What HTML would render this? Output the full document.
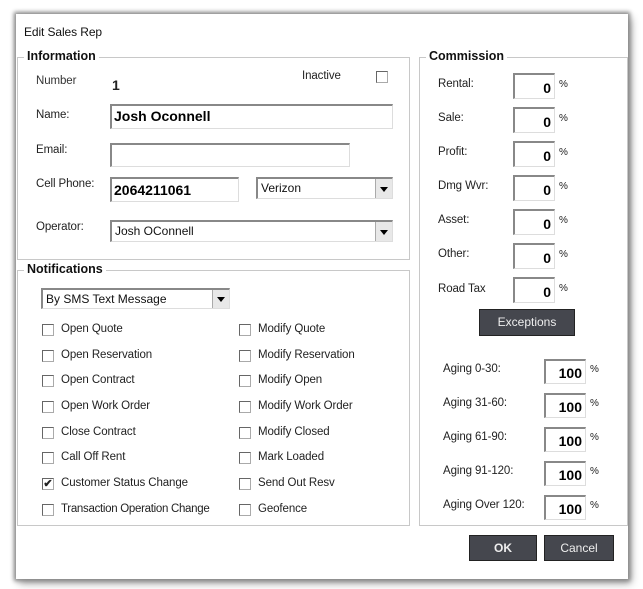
<!DOCTYPE html>
<html><head><style>
*{box-sizing:border-box;margin:0;padding:0}
body{width:643px;height:589px;background:#fff;position:relative;font-family:"Liberation Sans",sans-serif;font-size:11.5px;color:#222;overflow:hidden}
.dlg{position:absolute;left:16px;top:14px;width:612px;height:565px;background:#fff;box-shadow:0 0 4px 2px #888,3px 4px 8px #999}
.a{position:absolute;white-space:nowrap;letter-spacing:-0.1px}
.grp{position:absolute;border:1px solid #c8c8c8}
.leg{position:absolute;background:#fff;font-weight:bold;font-size:12.5px;color:#111;padding:0 3px;top:-9px;left:6px}
.inp{position:absolute;background:#fff;border:1px solid #ddd;border-top:2px solid #888;border-left:2px solid #888;font-weight:bold;font-size:14px;color:#000;padding-left:2px}
.sel{position:absolute;background:#fff;border:1px solid #ddd;border-top:2px solid #888;border-left:2px solid #888;font-size:12px;padding-left:3px;color:#111}
.sel:after{content:"";position:absolute;right:0;top:0;bottom:0;width:16px;background:#e8e8e8;border-left:1px solid #aaa}
.sel i{position:absolute;right:4px;top:50%;margin-top:-2px;border:4px solid transparent;border-top:5px solid #000;border-bottom:0;z-index:2}
.cb{position:absolute;width:12px;height:12px;border:1px solid #aaa;border-top:1px solid #666;border-left:1px solid #666;background:#fff}
.num{position:absolute;background:#fff;border:1px solid #ddd;border-top:2px solid #888;border-left:2px solid #888;font-weight:bold;font-size:14px;text-align:right;padding-right:3px;color:#000}
.btn{position:absolute;background:#45474e;color:#eee;border:1px solid #222;text-align:center;font-size:12px}
.p{position:absolute;font-size:10px}
</style></head><body>
<div class="dlg"></div>
<div class="a" style="left:24px;top:25px;font-size:12px;color:#111">Edit Sales Rep</div>

<div class="grp" style="left:17px;top:57px;width:393px;height:203px"><div class="leg">Information</div></div>
<div class="a" style="left:36px;top:75px;color:#333">Number</div>
<div class="a" style="left:112px;top:77px;font-weight:bold;font-size:14px">1</div>
<div class="a" style="left:302px;top:70px">Inactive</div>
<div class="cb" style="left:376px;top:71px"></div>
<div class="a" style="left:36px;top:109px">Name:</div>
<div class="inp" style="left:110px;top:104px;width:283px;height:25px;line-height:21px">Josh Oconnell</div>
<div class="a" style="left:36px;top:144px">Email:</div>
<div class="inp" style="left:110px;top:143px;width:240px;height:24px"></div>
<div class="a" style="left:36px;top:178px">Cell Phone:</div>
<div class="inp" style="left:110px;top:177px;width:129px;height:25px;line-height:22px">2064211061</div>
<div class="sel" style="left:256px;top:177px;width:137px;height:22px;line-height:19px">Verizon<i></i></div>
<div class="a" style="left:36px;top:221px">Operator:</div>
<div class="sel" style="left:110px;top:220px;width:283px;height:22px;line-height:19px">Josh OConnell<i></i></div>

<div class="grp" style="left:17px;top:270px;width:393px;height:256px"><div class="leg">Notifications</div></div>
<div class="sel" style="left:41px;top:288px;width:189px;height:21px;line-height:18px">By SMS Text Message<i></i></div>

<div class="cb" style="left:42px;top:324px"></div><div class="a" style="left:61px;top:323px">Open Quote</div>
<div class="cb" style="left:42px;top:350px"></div><div class="a" style="left:61px;top:349px">Open Reservation</div>
<div class="cb" style="left:42px;top:375px"></div><div class="a" style="left:61px;top:374px">Open Contract</div>
<div class="cb" style="left:42px;top:401px"></div><div class="a" style="left:61px;top:400px">Open Work Order</div>
<div class="cb" style="left:42px;top:427px"></div><div class="a" style="left:61px;top:426px">Close Contract</div>
<div class="cb" style="left:42px;top:452px"></div><div class="a" style="left:61px;top:451px">Call Off Rent</div>
<div class="cb" style="left:42px;top:478px;font-size:11px;line-height:10px;text-align:center;font-weight:bold">✔</div><div class="a" style="left:61px;top:477px">Customer Status Change</div>
<div class="cb" style="left:42px;top:504px"></div><div class="a" style="left:61px;top:503px;letter-spacing:-0.3px">Transaction Operation Change</div>

<div class="cb" style="left:239px;top:324px"></div><div class="a" style="left:258px;top:323px">Modify Quote</div>
<div class="cb" style="left:239px;top:350px"></div><div class="a" style="left:258px;top:349px">Modify Reservation</div>
<div class="cb" style="left:239px;top:375px"></div><div class="a" style="left:258px;top:374px">Modify Open</div>
<div class="cb" style="left:239px;top:401px"></div><div class="a" style="left:258px;top:400px">Modify Work Order</div>
<div class="cb" style="left:239px;top:427px"></div><div class="a" style="left:258px;top:426px">Modify Closed</div>
<div class="cb" style="left:239px;top:452px"></div><div class="a" style="left:258px;top:451px">Mark Loaded</div>
<div class="cb" style="left:239px;top:478px"></div><div class="a" style="left:258px;top:477px">Send Out Resv</div>
<div class="cb" style="left:239px;top:504px"></div><div class="a" style="left:258px;top:503px">Geofence</div>

<div class="grp" style="left:419px;top:57px;width:209px;height:469px"><div class="leg">Commission</div></div>
<div class="a" style="left:438px;top:78px">Rental:</div><div class="num" style="left:513px;top:73px;width:42px;height:26px;line-height:26px">0</div><div class="p" style="left:559px;top:79px">%</div>
<div class="a" style="left:438px;top:112px">Sale:</div><div class="num" style="left:513px;top:107px;width:42px;height:26px;line-height:26px">0</div><div class="p" style="left:559px;top:113px">%</div>
<div class="a" style="left:438px;top:146px">Profit:</div><div class="num" style="left:513px;top:141px;width:42px;height:26px;line-height:26px">0</div><div class="p" style="left:559px;top:147px">%</div>
<div class="a" style="left:438px;top:180px">Dmg Wvr:</div><div class="num" style="left:513px;top:175px;width:42px;height:26px;line-height:26px">0</div><div class="p" style="left:559px;top:181px">%</div>
<div class="a" style="left:438px;top:214px">Asset:</div><div class="num" style="left:513px;top:209px;width:42px;height:26px;line-height:26px">0</div><div class="p" style="left:559px;top:215px">%</div>
<div class="a" style="left:438px;top:248px">Other:</div><div class="num" style="left:513px;top:243px;width:42px;height:26px;line-height:26px">0</div><div class="p" style="left:559px;top:249px">%</div>
<div class="a" style="left:438px;top:283px">Road Tax</div><div class="num" style="left:513px;top:277px;width:42px;height:26px;line-height:26px">0</div><div class="p" style="left:559px;top:283px">%</div>
<div class="btn" style="left:479px;top:309px;width:96px;height:27px;line-height:25px">Exceptions</div>

<div class="a" style="left:443px;top:363px">Aging 0-30:</div><div class="num" style="left:544px;top:359px;width:42px;height:25px;line-height:24px">100</div><div class="p" style="left:590px;top:364px">%</div>
<div class="a" style="left:443px;top:397px">Aging 31-60:</div><div class="num" style="left:544px;top:393px;width:42px;height:25px;line-height:24px">100</div><div class="p" style="left:590px;top:398px">%</div>
<div class="a" style="left:443px;top:431px">Aging 61-90:</div><div class="num" style="left:544px;top:427px;width:42px;height:25px;line-height:24px">100</div><div class="p" style="left:590px;top:432px">%</div>
<div class="a" style="left:443px;top:465px">Aging 91-120:</div><div class="num" style="left:544px;top:461px;width:42px;height:25px;line-height:24px">100</div><div class="p" style="left:590px;top:466px">%</div>
<div class="a" style="left:443px;top:499px">Aging Over 120:</div><div class="num" style="left:544px;top:495px;width:42px;height:25px;line-height:24px">100</div><div class="p" style="left:590px;top:500px">%</div>

<div class="btn" style="left:469px;top:535px;width:68px;height:26px;line-height:24px;font-weight:bold">OK</div>
<div class="btn" style="left:544px;top:535px;width:70px;height:26px;line-height:24px">Cancel</div>
</body></html>
